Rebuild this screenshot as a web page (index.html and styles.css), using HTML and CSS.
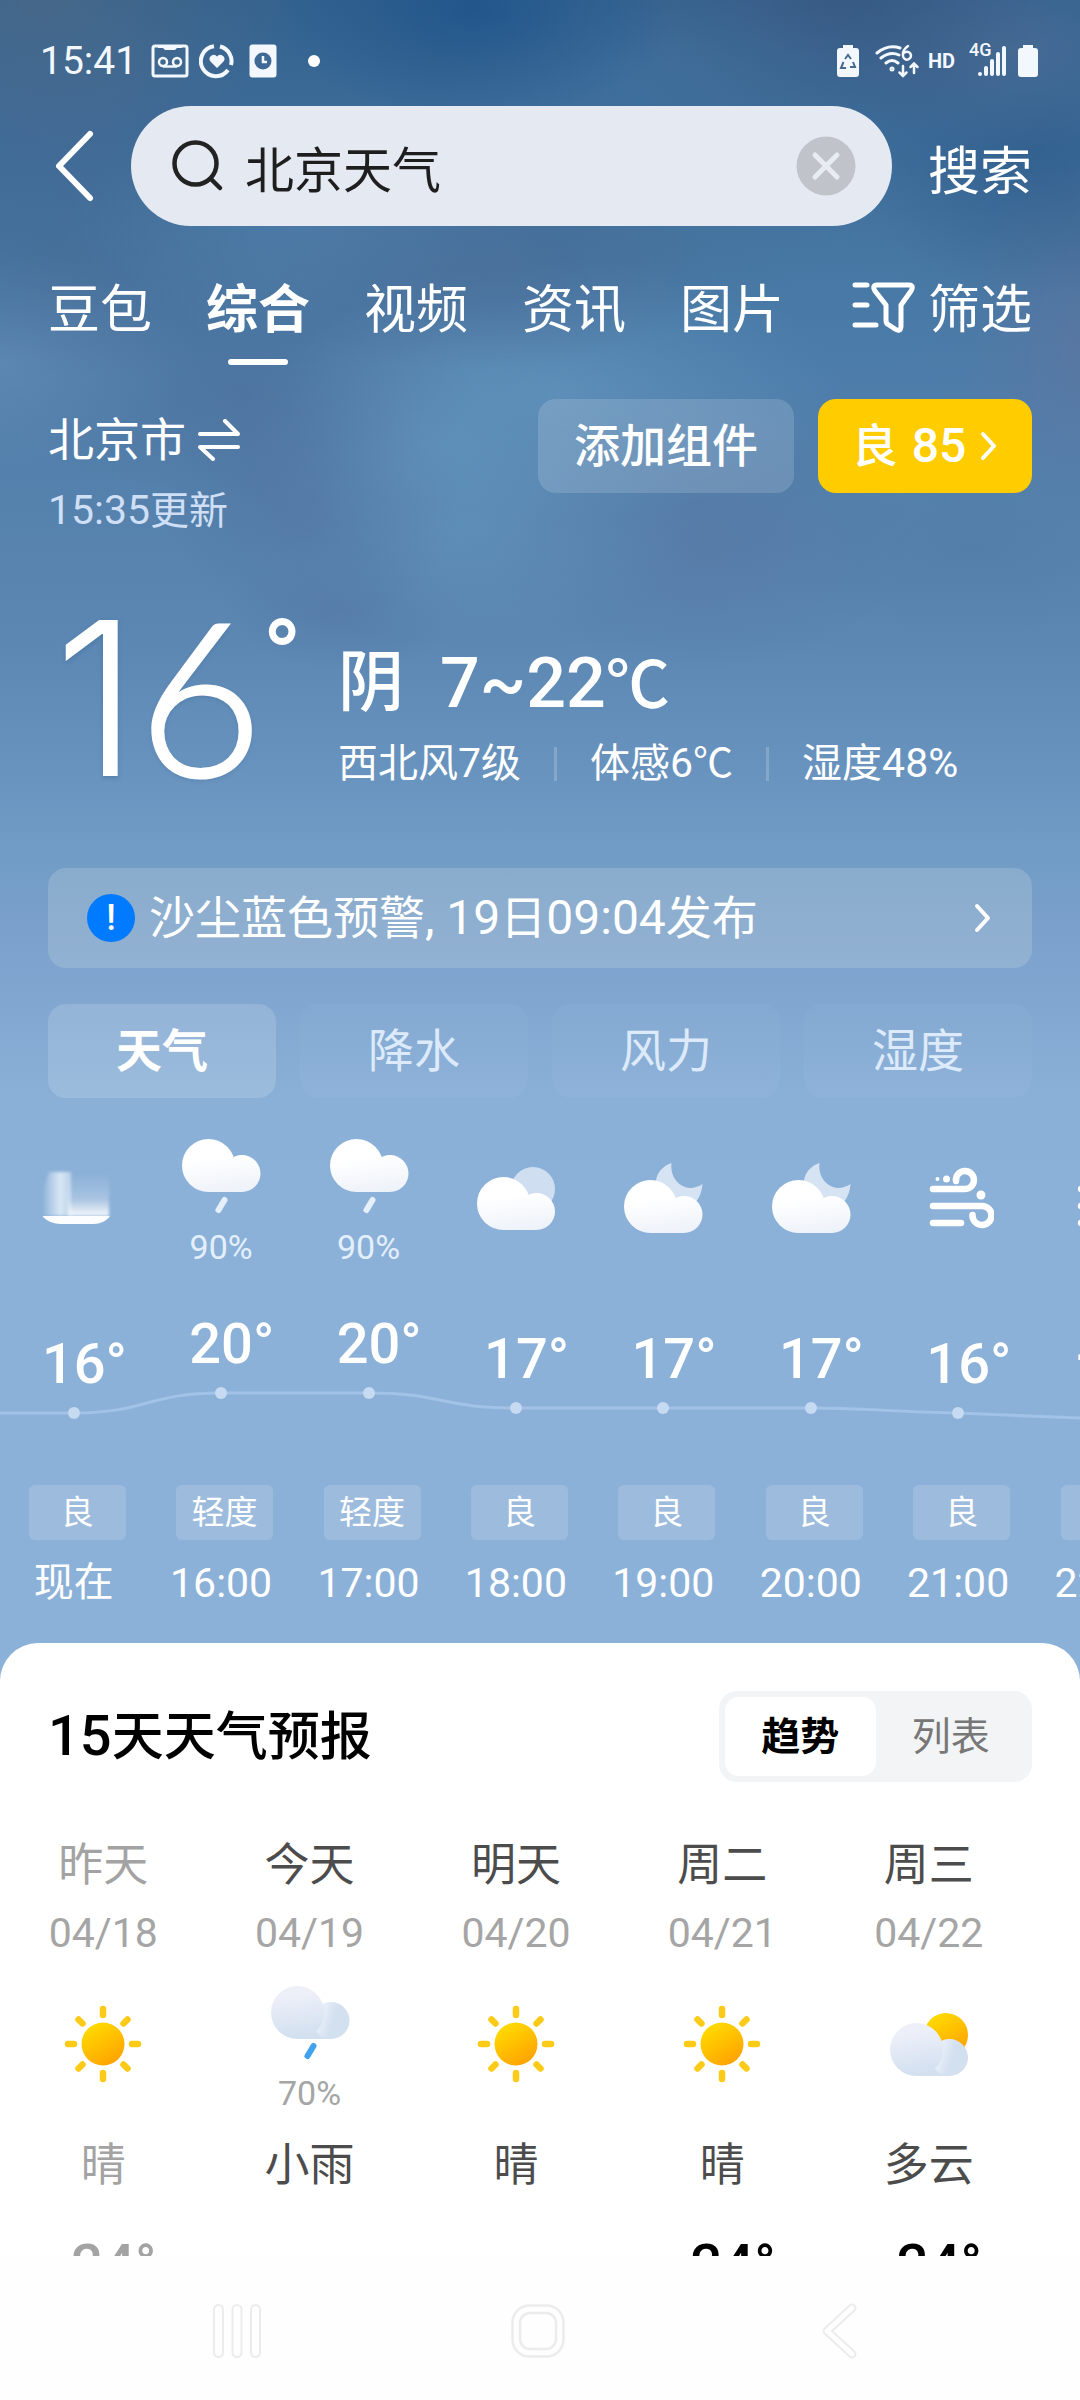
FILE: index.html
```html
<!DOCTYPE html>
<html lang="zh-CN">
<head>
<meta charset="utf-8">
<meta name="viewport" content="width=device-width, initial-scale=1">
<title>北京天气</title>
<link rel="stylesheet" href="styles.css">
</head>
<body>
<svg class="defs" aria-hidden="true">
  <defs>
    <linearGradient id="white-cloud" gradientUnits="userSpaceOnUse" x1="30" y1="10" x2="36" y2="64">
      <stop offset="0.2" stop-color="#ffffff"/><stop offset="1" stop-color="#e9eff8"/>
    </linearGradient>
    <linearGradient id="blue-cloud" gradientUnits="userSpaceOnUse" x1="30" y1="8" x2="36" y2="50">
      <stop offset="0" stop-color="#eef0f9"/><stop offset="1" stop-color="#d3e0f0"/>
    </linearGradient>
    <linearGradient id="blue-bump" gradientUnits="userSpaceOnUse" x1="50" y1="36" x2="62" y2="40">
      <stop offset="0" stop-color="#e6edf8"/><stop offset="1" stop-color="#d3e0f0"/>
    </linearGradient>
    <linearGradient id="sun-fill" x1="0.2" y1="0" x2="0.8" y2="1">
      <stop offset="0" stop-color="#ffde00"/><stop offset="1" stop-color="#ff9f00"/>
    </linearGradient>
    <linearGradient id="haze-side" x1="0" y1="0" x2="0" y2="1">
      <stop offset="0" stop-color="#ffffff" stop-opacity="0"/><stop offset="0.6" stop-color="#ffffff" stop-opacity="0.25"/><stop offset="1" stop-color="#ffffff" stop-opacity="0.9"/>
    </linearGradient>
    <linearGradient id="haze-post" x1="0" y1="0" x2="1" y2="0">
      <stop offset="0" stop-color="#e6f1fa" stop-opacity="0.1"/><stop offset="0.6" stop-color="#e6f1fa" stop-opacity="0.85"/><stop offset="1" stop-color="#e6f1fa" stop-opacity="0.5"/>
    </linearGradient>
    <filter id="haze-soft"><feGaussianBlur stdDeviation="1.500"/></filter>
    <symbol id="i-rain" viewBox="0 0 80 84">
      <g fill="url(#white-cloud)" transform="translate(0 8)"><circle cx="27.500" cy="27.500" r="26.500"/><circle cx="61" cy="35.500" r="18.500"/><path d="M27 32H61V54H27Z"/></g>
      <path d="M43.500 70L37.500 80" stroke="#e6f0fb" stroke-width="6" stroke-linecap="round"/>
    </symbol>
    <symbol id="i-cloudy" viewBox="0 0 80 66">
      <circle cx="57" cy="24" r="22" fill="#cfdff1"/>
      <g fill="url(#white-cloud)" transform="translate(0 11)"><circle cx="27.500" cy="27.500" r="26.500"/><circle cx="60.500" cy="35.500" r="18.500"/><path d="M27 32H61V54H27Z"/></g>
    </symbol>
    <symbol id="i-moon" viewBox="0 0 80 74">
      <path d="M48.500 2C40 5 34 11 33 20L50 46L73 41C77 36 79 30 79.500 23C74 26.500 68 28 62 26C53 23 47 13 48.500 2Z" fill="#d5e3f3"/>
      <g fill="url(#white-cloud)" transform="translate(0 18)"><circle cx="27.500" cy="27.500" r="26.500"/><circle cx="61" cy="35.500" r="18.500"/><path d="M27 32H61V54H27Z"/></g>
    </symbol>
    <symbol id="i-wind" viewBox="0 0 72 64">
      <g transform="translate(4 0)">
        <g fill="none" stroke="#fff" stroke-width="6.500" stroke-linecap="round">
          <path d="M7 23H38.600A9 9 0 1 0 30 15"/><path d="M7 40H56A9.500 9.500 0 1 1 46.500 49"/><path d="M7 57H35"/>
        </g>
        <g fill="#fff"><circle cx="11.500" cy="13" r="2"/><circle cx="20.500" cy="13" r="3.500"/><circle cx="55" cy="29" r="4.500"/></g>
      </g>
    </symbol>
    <symbol id="i-haze" viewBox="0 0 80 60">
      <path d="M15 4H37V48H10V20Z" fill="url(#haze-post)" filter="url(#haze-soft)"/>
      <path d="M34 6H75V48H34Z" fill="url(#haze-side)" filter="url(#haze-soft)"/>
      <path d="M9 48H75.500V49Q69 56 60 56H27Q16 56 9 49Z" fill="#fbfdff"/>
    </symbol>
    <symbol id="i-sun" viewBox="0 0 80 80">
      <circle cx="40" cy="40" r="21.500" fill="url(#sun-fill)"/>
      <g stroke="#fccb18" stroke-width="6.500" stroke-linecap="round">
        <path d="M40 5V11M40 69V75M5 40H11M69 40H75M15.500 15.500L19.500 19.500M60.500 60.500L64.500 64.500M15.500 64.500L19.500 60.500M60.500 19.500L64.500 15.500"/>
      </g>
    </symbol>
    <symbol id="i-day-rain" viewBox="0 0 80 84">
      <g transform="translate(0 9)"><path fill="#d3e0f0" d="M27 34H61V54H27Z"/><circle cx="61" cy="35.500" r="18.500" fill="url(#blue-bump)"/><circle cx="27.500" cy="27.500" r="26.500" fill="url(#blue-cloud)"/></g>
      <path d="M43.500 70L37.500 80" stroke="#41a2ee" stroke-width="6" stroke-linecap="round"/>
    </symbol>
    <symbol id="i-partly" viewBox="0 0 80 66">
      <circle cx="57" cy="24" r="22" fill="url(#sun-fill)"/>
      <g transform="translate(0 11)"><path fill="#d3e0f0" d="M27 34H61V54H27Z"/><circle cx="60.500" cy="35.500" r="18.500" fill="url(#blue-bump)"/><circle cx="27.500" cy="27.500" r="26.500" fill="url(#blue-cloud)"/></g>
    </symbol>
  </defs>
</svg>

<div class="app">
  <main class="screen">
    <div class="status">
      <time class="clock">15:41</time>
      <svg class="st-voicemail" width="38" height="34" viewBox="0 0 38 34" fill="none" stroke="#f3f8ff" stroke-width="3">
        <rect x="2" y="2" width="34" height="30" rx="2"/><path d="M7 2V4H12L14 6H24L26 4H31V2" fill="#f3f8ff" stroke="none"/>
        <g stroke-width="2.500"><circle cx="12" cy="18" r="4"/><circle cx="26" cy="18" r="4"/><path d="M12 22.500H26"/></g>
      </svg>
      <svg class="st-heart" width="36" height="36" viewBox="0 0 36 36">
        <path d="M21 3.500A15 15 0 0 1 32 22M29 27A15 15 0 1 1 15 3.300" fill="none" stroke="#f3f8ff" stroke-width="4"/>
        <path d="M18 25L11.500 18.500A4 4 0 0 1 18 13.500A4 4 0 0 1 24.500 18.500Z" fill="#f3f8ff"/>
      </svg>
      <svg class="st-card" width="28" height="34" viewBox="0 0 28 34">
        <rect x="0.500" y="0.500" width="27" height="33" rx="3" fill="#f3f8ff"/><circle cx="14" cy="17" r="8.500" fill="#3f6a97"/>
        <path d="M14 12V18H18" fill="none" stroke="#f3f8ff" stroke-width="2.500"/>
      </svg>
      <span class="st-dot"></span>
      <span class="st-right">
        <svg width="24" height="34" viewBox="0 0 24 34">
          <path d="M7 1H17V4H20Q23 4 23 7V30Q23 33 20 33H4Q1 33 1 30V7Q1 4 4 4H7Z" fill="#f3f8ff"/>
          <path d="M9 15L12 11L15 15M17 18L19 23H14M10 24H5L7.500 18" fill="none" stroke="#48698f" stroke-width="2"/>
        </svg>
        <svg class="st-wifi" width="46" height="34" viewBox="0 0 46 34" fill="none" stroke="#f3f8ff" stroke-width="3" stroke-linecap="round">
          <path d="M3 9Q14 0 26 4M7 14Q16 7 25 11M12 19Q18 14 24 19"/><circle cx="18" cy="25" r="1"/>
          <path d="M34 2Q28 6 29 12A4 4 0 1 0 30 9" stroke-width="2.500"/>
          <path d="M29 22V32M25.500 28.500L29 32L32.500 28.500M40 29V20M36.500 23L40 19.500L43.500 23" stroke-width="2.500"/>
        </svg>
        <span class="st-hd">HD</span>
        <span class="st-signal">
          <span class="st-4g">4G</span>
          <svg width="30" height="30" viewBox="0 0 30 30" fill="#f3f8ff"><circle cx="3" cy="28" r="2"/><rect x="7" y="20" width="4" height="10" rx="2"/><rect x="13" y="13" width="4" height="17" rx="2"/><rect x="19" y="6" width="4" height="24" rx="2"/><rect x="25" y="0" width="4" height="30" rx="2"/></svg>
        </span>
        <svg width="22" height="34" viewBox="0 0 22 34"><path d="M6 1H16V4H18Q21 4 21 7V30Q21 33 18 33H4Q1 33 1 30V7Q1 4 4 4H6Z" fill="#f3f8ff"/></svg>
      </span>
    </div>

    <form class="search-row" onsubmit="return false">
      <button class="back" type="button" aria-label="返回">
        <svg width="44" height="76" viewBox="0 0 44 76" fill="none" stroke="#fff" stroke-width="6" stroke-linecap="round" stroke-linejoin="round"><path d="M38 6L7 38L38 70"/></svg>
      </button>
      <div class="search-box">
        <svg width="56" height="56" viewBox="0 0 56 56" fill="none" stroke="#222" stroke-width="4.500" stroke-linecap="round"><circle cx="26.500" cy="25.500" r="21"/><path d="M42 41L51 50"/></svg>
        <input type="text" value="北京天气" aria-label="搜索内容">
        <button class="clear" type="button" aria-label="清除">
          <svg width="60" height="60" viewBox="0 0 60 60"><circle cx="30" cy="30" r="29.500" fill="#c0c4ca"/><path d="M19 19L41 41M41 19L19 41" stroke="#e7ecf3" stroke-width="5" stroke-linecap="round"/></svg>
        </button>
      </div>
      <button class="go" type="submit">搜索</button>
    </form>

    <nav class="tabs">
      <a href="#doubao">豆包</a>
      <a href="#all" class="on">综合</a>
      <a href="#video">视频</a>
      <a href="#news">资讯</a>
      <a href="#images">图片</a>
      <button class="filter" type="button">
        <svg width="66" height="60" viewBox="0 0 66 60" fill="none" stroke="#fff" stroke-width="5" stroke-linecap="round" stroke-linejoin="round">
          <path d="M4 4H16M4 24H16M4 44H25"/><path d="M26 4H58C62 4 62 7 60 10L50 24V45C50 50 47 50 44 48L38 44Q35 43 35 39V24L24 10C22 7 22 4 26 4Z"/>
        </svg>
        筛选
      </button>
    </nav>

    <section class="weather">
      <div class="place">
        <div class="place-text">
          <a class="city" href="#city">北京市
            <svg width="42" height="42" viewBox="0 0 42 42" fill="none" stroke="#fff" stroke-width="4" stroke-linecap="round" stroke-linejoin="round"><path d="M2 15H40L27 2M40 28H2L15 40"/></svg>
          </a>
          <p class="updated"><span class="n41">15:35</span>更新</p>
        </div>
        <button class="add" type="button">添加组件</button>
        <button class="aqi" type="button">良 <span class="n48">85</span>
          <svg width="18" height="30" viewBox="0 0 18 30" fill="none" stroke="#fff" stroke-width="4" stroke-linecap="round" stroke-linejoin="round"><path d="M3 3L14 15L3 27"/></svg>
        </button>
      </div>

      <div class="now">
        <p class="big"><span class="one">1</span><span class="six">6</span><span class="deg">°</span></p>
        <div class="summary">
          <p class="sky">阴<span class="range">7~22<span class="unit">℃</span></span></p>
          <ul class="facts">
            <li>西北风<span class="n41">7</span>级</li>
            <li>体感<span class="n41">6</span><span class="unit">℃</span></li>
            <li>湿度<span class="n41">48%</span></li>
          </ul>
        </div>
      </div>

      <a class="alert" href="#alert">
        <span class="mark">!</span>
        <span class="alert-text">沙尘蓝色预警<span class="n48">, 19</span>日<span class="n48">09:04</span>发布</span>
        <svg width="18" height="30" viewBox="0 0 18 30" fill="none" stroke="#fff" stroke-width="4" stroke-linecap="round" stroke-linejoin="round"><path d="M3 3L14 15L3 27"/></svg>
      </a>

      <div class="modes">
        <button type="button" class="on">天气</button>
        <button type="button">降水</button>
        <button type="button">风力</button>
        <button type="button">湿度</button>
      </div>
    </section>

    <section class="hourly">
      <svg class="curve" viewBox="0 0 1080 32" preserveAspectRatio="none" fill="none" stroke="#a2c2e8" stroke-width="3"><path d="M0 24H74C147 24 147 4 221 4H368C442 4 442 19 516 19H810C860 19 900 23 958 24L1080 29"/></svg>
      <ol class="hours">
        <li><div class="icon"><svg width="80" height="60"><use href="#i-haze"/></svg></div><div class="reading" style="--rise:0px"><span class="temp">16<i>°</i></span></div><span class="tag">良</span><span class="hour cn">现在</span></li>
        <li><div class="icon"><svg width="80" height="84"><use href="#i-rain"/></svg><span>90%</span></div><div class="reading" style="--rise:20px"><span class="temp">20<i>°</i></span></div><span class="tag">轻度</span><span class="hour">16:00</span></li>
        <li><div class="icon"><svg width="80" height="84"><use href="#i-rain"/></svg><span>90%</span></div><div class="reading" style="--rise:20px"><span class="temp">20<i>°</i></span></div><span class="tag">轻度</span><span class="hour">17:00</span></li>
        <li><div class="icon"><svg width="80" height="66"><use href="#i-cloudy"/></svg></div><div class="reading" style="--rise:5px"><span class="temp">17<i>°</i></span></div><span class="tag">良</span><span class="hour">18:00</span></li>
        <li><div class="icon"><svg width="80" height="74"><use href="#i-moon"/></svg></div><div class="reading" style="--rise:5px"><span class="temp">17<i>°</i></span></div><span class="tag">良</span><span class="hour">19:00</span></li>
        <li><div class="icon"><svg width="80" height="74"><use href="#i-moon"/></svg></div><div class="reading" style="--rise:5px"><span class="temp">17<i>°</i></span></div><span class="tag">良</span><span class="hour">20:00</span></li>
        <li><div class="icon"><svg width="72" height="64"><use href="#i-wind"/></svg></div><div class="reading" style="--rise:0px"><span class="temp">16<i>°</i></span></div><span class="tag">良</span><span class="hour">21:00</span></li>
        <li><div class="icon"><svg width="72" height="64"><use href="#i-wind"/></svg></div><div class="reading" style="--rise:-6px"><span class="temp">15<i>°</i></span></div><span class="tag">良</span><span class="hour">22:00</span></li>
      </ol>
    </section>

    <section class="forecast">
      <header>
        <h2><span class="n56">15</span>天天气预报</h2>
        <div class="switch">
          <button type="button" class="on">趋势</button>
          <button type="button">列表</button>
        </div>
      </header>
      <ol class="days">
        <li class="past"><span class="day">昨天</span><span class="date">04/18</span><div class="icon"><svg width="80" height="80"><use href="#i-sun"/></svg></div><span class="day sky-name">晴</span><span class="temp">24<i>°</i></span></li>
        <li><span class="day">今天</span><span class="date">04/19</span><div class="icon"><svg width="80" height="84"><use href="#i-day-rain"/></svg><span>70%</span></div><span class="day sky-name">小雨</span></li>
        <li><span class="day">明天</span><span class="date">04/20</span><div class="icon"><svg width="80" height="80"><use href="#i-sun"/></svg></div><span class="day sky-name">晴</span></li>
        <li><span class="day">周二</span><span class="date">04/21</span><div class="icon"><svg width="80" height="80"><use href="#i-sun"/></svg></div><span class="day sky-name">晴</span><span class="temp">24<i>°</i></span></li>
        <li><span class="day">周三</span><span class="date">04/22</span><div class="icon"><svg width="80" height="66"><use href="#i-partly"/></svg></div><span class="day sky-name">多云</span><span class="temp">24<i>°</i></span></li>
      </ol>
    </section>
  </main>

  <nav class="system-bar">
    <button type="button" aria-label="最近任务"><svg width="52" height="56" viewBox="0 0 52 56" fill="none" stroke="#ececec" stroke-width="2"><rect x="3" y="2" width="9" height="52" rx="4.500"/><rect x="21.500" y="2" width="9" height="52" rx="4.500"/><rect x="40" y="2" width="9" height="52" rx="4.500"/></svg></button>
    <button type="button" aria-label="主屏幕"><svg width="56" height="56" viewBox="0 0 56 56" fill="none" stroke="#ececec" stroke-width="2.500"><rect x="2.500" y="2.500" width="51" height="51" rx="17"/><rect x="10" y="10" width="36" height="36" rx="10"/></svg></button>
    <button type="button" aria-label="返回上一级"><svg width="38" height="58" viewBox="0 0 38 58" fill="none" stroke-linecap="round" stroke-linejoin="round"><path d="M32 6L7 29L32 52" stroke="#ececec" stroke-width="9"/><path d="M32 6L7 29L32 52" stroke="#fefefe" stroke-width="5"/></svg></button>
  </nav>
</div>
</body>
</html>
```
FILE: styles.css
```css
* {
  box-sizing: border-box;
}

body {
  margin: 0;
  font-family: Roboto, "Noto Sans CJK SC", sans-serif;
  color: #fff;
  background: #fefefe;
}

p,
h2,
ul,
ol {
  margin: 0;
  padding: 0;
  list-style: none;
}

a {
  color: inherit;
  text-decoration: none;
}

button,
input {
  margin: 0;
  padding: 0;
  border: 0;
  background: none;
  color: inherit;
  font: inherit;
}

svg {
  display: block;
  flex: none;
}

.defs {
  position: absolute;
  width: 0;
  height: 0;
}

/* Latin digits run slightly larger than the Chinese text beside them */
.n41 {
  font-size: 41px;
}

.n48 {
  font-size: 48px;
}

.n56 {
  font-size: 56px;
}

.unit {
  font-family: "Noto Sans CJK SC", sans-serif;
  line-height: 0;
}

.app {
  display: flex;
  flex-direction: column;
  height: 100vh;
}

.screen {
  flex: 1;
  min-height: 0;
  overflow: hidden;
  display: flex;
  flex-direction: column;
  background:
    radial-gradient(ellipse 260px 140px at 4% 0, #5d6f8270, #5d6f8238 50%, transparent),
    radial-gradient(ellipse 200px 110px at 44% 10px, #184f88a0, #184f8850 50%, transparent),
    radial-gradient(ellipse 240px 120px at 62% 70px, #4878a670, #4878a638 50%, transparent),
    radial-gradient(ellipse 240px 130px at 76% 10px, #3a527890, #3a527848 50%, transparent),
    radial-gradient(ellipse 180px 100px at 94% 50px, #56739a80, #56739a40 50%, transparent),
    radial-gradient(ellipse 180px 150px at 96% 150px, #28558680, #28558640 50%, transparent),
    radial-gradient(ellipse 240px 120px at 6% 130px, #47678f70, #47678f38 50%, transparent),
    radial-gradient(ellipse 240px 110px at 28% 230px, #5888b660, #5888b630 50%, transparent),
    radial-gradient(ellipse 180px 110px at 8% 270px, #47688f60, #47688f30 50%, transparent),
    radial-gradient(ellipse 260px 100px at 42% 270px, #4a699280, #4a699240 50%, transparent),
    radial-gradient(ellipse 300px 140px at 78% 300px, #4a80b050, #4a80b028 50%, transparent),
    radial-gradient(ellipse 120px 180px at 100% 340px, #64749c80, #64749c40 50%, transparent),
    radial-gradient(ellipse 200px 110px at 0 360px, #6c93bc80, #6c93bc40 50%, transparent),
    radial-gradient(ellipse 240px 110px at 22% 390px, #4c6c9570, #4c6c9538 50%, transparent),
    radial-gradient(ellipse 280px 130px at 52% 390px, #6a9ec680, #6a9ec640 50%, transparent),
    radial-gradient(ellipse 180px 130px at 39% 430px, #6a9ec660, #6a9ec630 50%, transparent),
    radial-gradient(ellipse 150px 130px at 29% 500px, #4f6d9a80, #4f6d9a40 50%, transparent),
    radial-gradient(ellipse 240px 110px at 43% 530px, #6397c080, #6397c040 50%, transparent),
    radial-gradient(ellipse 220px 130px at 65% 540px, #556f9a60, #556f9a30 50%, transparent),
    radial-gradient(ellipse 200px 90px at 90% 550px, #4a78a060, #4a78a030 50%, transparent),
    radial-gradient(ellipse 120px 60px at 32% 610px, #50729f70, #50729f38 50%, transparent),
    linear-gradient(#33628f 0, #3d6c99 130px, #45739e 250px, #4e7ca9 380px, #5682ae 520px, #5c87b3 640px, #6893be 770px, #709cc5 850px, #7ba0cb 930px, #81a7d1 1000px, #8bb0d7 1100px, #8cb1d8 1200px);
}

.status {
  display: flex;
  align-items: center;
  height: 90px;
  padding: 32px 41px 0 40px;
  color: #f3f8ff;
}

.clock {
  font-size: 39px;
  line-height: 48px;
}

.st-voicemail {
  margin-left: 14px;
}

.st-heart {
  margin-left: 10px;
}

.st-card {
  margin-left: 14px;
}

.st-dot {
  width: 12px;
  height: 12px;
  margin-left: 31px;
  border-radius: 50%;
  background: #fff;
}

.st-right {
  display: flex;
  align-items: center;
  margin-left: auto;
}

.st-wifi {
  margin-left: 14px;
}

.st-hd {
  margin: 0 14px 0 8px;
  font-size: 20px;
  font-weight: 700;
  line-height: 24px;
}

.st-signal {
  position: relative;
  width: 38px;
  margin-right: 10px;
}

.st-signal svg {
  margin-left: auto;
}

.st-4g {
  position: absolute;
  left: 0;
  top: -6px;
  font-size: 18px;
  font-weight: 500;
  line-height: 20px;
}

.search-row {
  display: flex;
  align-items: center;
  padding: 16px 48px 0;
}

.back {
  width: 83px;
  padding-left: 4px;
}

.search-box {
  flex: 1;
  min-width: 0;
  display: flex;
  align-items: center;
  gap: 20px;
  height: 120px;
  padding: 0 36px 0 38px;
  border-radius: 60px;
  background: #e5eaf2;
}

.search-box input {
  flex: 1;
  min-width: 0;
  height: 72px;
  font-size: 49px;
  color: #1e1e1e;
  outline: 0;
}

.go {
  margin-left: 36px;
  padding-top: 14px;
  font-size: 52px;
  line-height: 70px;
}

.tabs {
  display: flex;
  gap: 54px;
  margin-top: 53px;
  padding: 0 48px;
  font-size: 52px;
  line-height: 64px;
  white-space: nowrap;
}

.tabs a {
  position: relative;
}

.tabs .on {
  font-weight: 700;
}

.tabs .on::after {
  content: "";
  position: absolute;
  left: 22px;
  right: 22px;
  bottom: -22px;
  height: 6px;
  border-radius: 3px;
  background: #fff;
}

.filter {
  display: flex;
  align-items: center;
  gap: 11px;
  margin-left: auto;
}

.weather {
  padding: 56px 48px 0;
}

.place {
  display: flex;
  align-items: flex-start;
}

.place-text {
  flex: 1;
  padding-top: 11px;
}

.city {
  display: flex;
  align-items: center;
  gap: 12px;
  font-size: 46px;
  line-height: 60px;
}

.updated {
  margin-top: 12px;
  font-size: 39px;
  line-height: 56px;
  color: #cfdff5;
}

.add,
.aqi {
  height: 94px;
  border-radius: 18px;
  font-size: 46px;
  font-weight: 500;
  line-height: 94px;
}

.add {
  width: 256px;
  background: #ffffff26;
}

.aqi {
  display: flex;
  align-items: center;
  justify-content: center;
  gap: 14px;
  width: 214px;
  margin-left: 24px;
  background: #ffcc00;
}

.now {
  display: flex;
  margin-top: 72px;
}

.big {
  display: flex;
  align-items: baseline;
  width: 290px;
  height: 163px;
  padding: 3px 0 0 6px;
  font-size: 214px;
  line-height: 160px;
  text-shadow: 0 2px 4px #2f5f9060;
}

.one {
  font-family: Inter, Roboto, sans-serif;
  font-weight: 300;
}

.six {
  font-family: Lato, Roboto, sans-serif;
  font-weight: 300;
  -webkit-text-stroke: 3px #fff;
}

.deg {
  font-size: 104px;
  font-weight: 500;
  line-height: 88px;
  align-self: flex-start;
  text-shadow: none;
}

.summary {
  padding-top: 32px;
}

.sky {
  display: flex;
  align-items: center;
  gap: 36px;
  font-size: 66px;
  font-weight: 500;
  line-height: 80px;
}

.range {
  font-size: 70px;
}

.range .unit {
  font-size: 64px;
}

.facts {
  display: flex;
  margin-top: 16px;
  font-size: 40px;
  line-height: 48px;
  white-space: nowrap;
}

.facts li + li {
  display: flex;
  align-items: baseline;
}

.facts li + li::before {
  content: "";
  align-self: center;
  width: 3px;
  height: 34px;
  margin: 0 33px;
  background: #ffffff30;
}

.alert {
  display: flex;
  align-items: center;
  height: 100px;
  margin-top: 80px;
  padding: 0 40px 0 39px;
  border-radius: 18px;
  background: #ccdbe140;
  font-size: 46px;
  line-height: 60px;
}

.mark {
  width: 48px;
  height: 48px;
  border-radius: 50%;
  background: #007aff;
  font-size: 36px;
  font-weight: 500;
  line-height: 48px;
  text-align: center;
}

.alert-text {
  flex: 1;
  margin-left: 14px;
}

.modes {
  display: grid;
  grid-template-columns: repeat(4, 1fr);
  gap: 24px;
  margin-top: 36px;
}

.modes button {
  height: 94px;
  border-radius: 18px;
  background: #ffffff08;
  font-size: 46px;
  line-height: 94px;
  color: #dceafa;
}

.modes .on {
  background: #ffffff26;
  font-weight: 700;
  color: #fff;
}

.hourly {
  position: relative;
  padding: 31px 0 36px;
}

.curve {
  position: absolute;
  left: 0;
  top: 291px;
  width: 100%;
  height: 32px;
  overflow: visible;
}

.hours {
  position: relative;
  display: grid;
  grid-auto-flow: column;
  grid-auto-columns: 13.65%;
}

.hours li,
.days li {
  display: flex;
  flex-direction: column;
  align-items: center;
}

.icon {
  display: flex;
  flex-direction: column;
  align-items: center;
  justify-content: center;
  gap: 13px;
  height: 138px;
  font-size: 34px;
  line-height: 40px;
  color: #e3effc;
}

.reading {
  display: flex;
  flex-direction: column;
  align-items: center;
  height: 218px;
  padding-top: calc(71px - var(--rise));
}

.reading::after {
  content: "";
  width: 12px;
  height: 12px;
  margin-top: 17px;
  border-radius: 50%;
  background: #c6daf1;
}

.temp {
  position: relative;
  font-size: 56px;
  font-weight: 500;
  line-height: 52px;
}

.temp i {
  position: absolute;
  left: 100%;
  top: 0;
  font-style: normal;
}

.tag {
  width: 97px;
  height: 55px;
  margin-left: 7px;
  border-radius: 6px;
  background: #ffffff26;
  font-size: 33px;
  line-height: 55px;
  text-align: center;
}

.hour {
  margin-top: 19px;
  font-size: 41px;
  line-height: 48px;
}

.cn {
  font-size: 40px;
}

.forecast {
  flex: 1;
  min-height: 0;
  overflow: hidden;
  padding-top: 48px;
  border-radius: 38px 38px 0 0;
  background: #fff;
  color: #000;
}

.forecast header {
  display: flex;
  align-items: center;
  justify-content: space-between;
  padding: 0 48px;
}

.forecast h2 {
  font-size: 52px;
  font-weight: 500;
  line-height: 64px;
}

.switch {
  display: grid;
  grid-template-columns: 1fr 1fr;
  width: 313px;
  height: 91px;
  padding: 6px;
  border-radius: 18px;
  background: #f3f4f6;
}

.switch button {
  border-radius: 14px;
  font-size: 39px;
  line-height: 60px;
  color: #777;
}

.switch .on {
  background: #fff;
  font-weight: 700;
  color: #000;
}

.days {
  display: grid;
  grid-auto-flow: column;
  grid-auto-columns: 19.11%;
  margin-top: 54px;
  color: #4c4c4c;
}

.day {
  font-size: 45px;
  line-height: 60px;
}

.date {
  margin-top: 13px;
  font-size: 41px;
  line-height: 48px;
  color: #a5a5a5;
}

.days .icon {
  margin-top: 18px;
  color: #a5a5a5;
}

.sky-name {
  margin-top: 23px;
}

.days .temp {
  margin-top: 43px;
  color: #000;
}

.days .past,
.days .past .temp {
  color: #a3a3a3;
}

.system-bar {
  display: grid;
  grid-template-columns: repeat(3, 28%);
  justify-content: center;
  height: 144px;
  padding: 6px 4px 0 0;
  background: #fefefe;
}

.system-bar button {
  display: grid;
  place-items: center;
}
```
